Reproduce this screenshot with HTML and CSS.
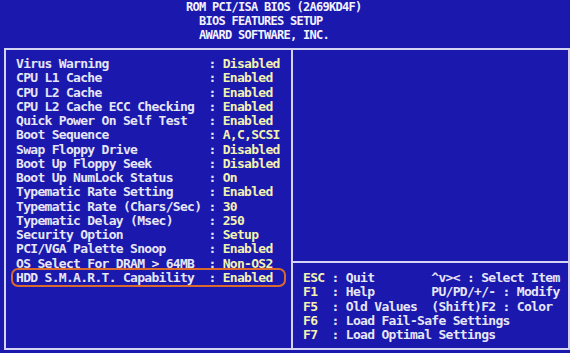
FILE: index.html
```html
<!DOCTYPE html>
<html lang="en">
<head>
  <meta charset="UTF-8" />
  <title>BIOS Features Setup</title>
  <link rel="stylesheet" href="styles.css">
</head>
<body>
  <div class="header">
    <div class="title t1">ROM PCI/ISA BIOS (2A69KD4F)</div>
    <div class="title t2">BIOS FEATURES SETUP</div>
    <div class="title t2">AWARD SOFTWARE, INC.</div>
  </div>

  <div class="frame">
    <div class="options">
      <div class="row"><span>Virus Warning</span><span>:</span><span class="val">Disabled</span></div>
      <div class="row"><span>CPU L1 Cache</span><span>:</span><span class="val">Enabled</span></div>
      <div class="row"><span>CPU L2 Cache</span><span>:</span><span class="val">Enabled</span></div>
      <div class="row"><span>CPU L2 Cache ECC Checking</span><span>:</span><span class="val">Enabled</span></div>
      <div class="row"><span>Quick Power On Self Test</span><span>:</span><span class="val">Enabled</span></div>
      <div class="row"><span>Boot Sequence</span><span>:</span><span class="val">A,C,SCSI</span></div>
      <div class="row"><span>Swap Floppy Drive</span><span>:</span><span class="val">Disabled</span></div>
      <div class="row"><span>Boot Up Floppy Seek</span><span>:</span><span class="val">Disabled</span></div>
      <div class="row"><span>Boot Up NumLock Status</span><span>:</span><span class="val">On</span></div>
      <div class="row"><span>Typematic Rate Setting</span><span>:</span><span class="val">Enabled</span></div>
      <div class="row"><span>Typematic Rate (Chars/Sec)</span><span>:</span><span class="val">30</span></div>
      <div class="row"><span>Typematic Delay (Msec)</span><span>:</span><span class="val">250</span></div>
      <div class="row"><span>Security Option</span><span>:</span><span class="val">Setup</span></div>
      <div class="row"><span>PCI/VGA Palette Snoop</span><span>:</span><span class="val">Enabled</span></div>
      <div class="row"><span>OS Select For DRAM &gt; 64MB</span><span>:</span><span class="val">Non-OS2</span></div>
      <div class="row marked"><span>HDD S.M.A.R.T. Capability</span><span>:</span><span class="val">Enabled</span></div>
    </div>

    <div class="side">
      <div class="blank"></div>
      <div class="help">
        <div class="line"><span class="key">ESC</span> : Quit        ^v&gt;&lt; : Select Item</div>
        <div class="line"><span class="key">F1</span>  : Help        PU/PD/+/- : Modify</div>
        <div class="line"><span class="key">F5</span>  : Old Values  (Shift)F2 : Color</div>
        <div class="line"><span class="key">F6</span>  : Load Fail-Safe Settings</div>
        <div class="line"><span class="key">F7</span>  : Load Optimal Settings</div>
      </div>
    </div>
  </div>
</body>
</html>
```

FILE: styles.css
```css
:root {
  --blue: #1a18ad;
  --line: #d4d4f2;
  --text: #e6e6f6;
  --yellow: #f4f2b0;
  --cell: 7.125px;
  --row: 14.27px;
}
* { box-sizing: border-box; margin: 0; padding: 0; }
body {
  background: var(--blue);
  color: var(--text);
  font-family: "DejaVu Sans Mono", "Liberation Mono", monospace;
  font-weight: bold;
  font-size: 13px;
  letter-spacing: -0.7px;
  line-height: var(--row);
  width: 570px;
  height: 353px;
  overflow: hidden;
}
.header {
  height: 48px;
}
.title {
  font-size: 12px;
  letter-spacing: -0.72px;
  line-height: 14px;
  color: #f2f2ff;
}
.t1 { padding-left: 186px; }
.t2 { padding-left: 199px; }

.frame {
  margin-left: 4px;
  width: 566px;
  height: 302px;
  border: 2px solid var(--line);
  display: flex;
}
.options {
  width: 287px;
  padding: 7px 10px 0 10px;
  border-right: 2px solid var(--line);
}
.row {
  display: grid;
  grid-template-columns: calc(var(--cell) * 27) calc(var(--cell) * 2) 1fr;
  white-space: pre;
}
.val { color: var(--yellow); }
.marked { position: relative; }
.marked::after {
  content: "";
  position: absolute;
  top: -3px;
  bottom: -2px;
  left: -5px;
  right: -5px;
  border: 2px solid #d9692c;
  border-radius: 7px;
}
.side {
  flex: 1;
  display: flex;
  flex-direction: column;
}
.blank { height: 211px; }
.help {
  border-top: 2px solid var(--line);
  padding: 8px 0 0 10px;
}
.line { white-space: pre; }
.key { color: var(--yellow); }
```
